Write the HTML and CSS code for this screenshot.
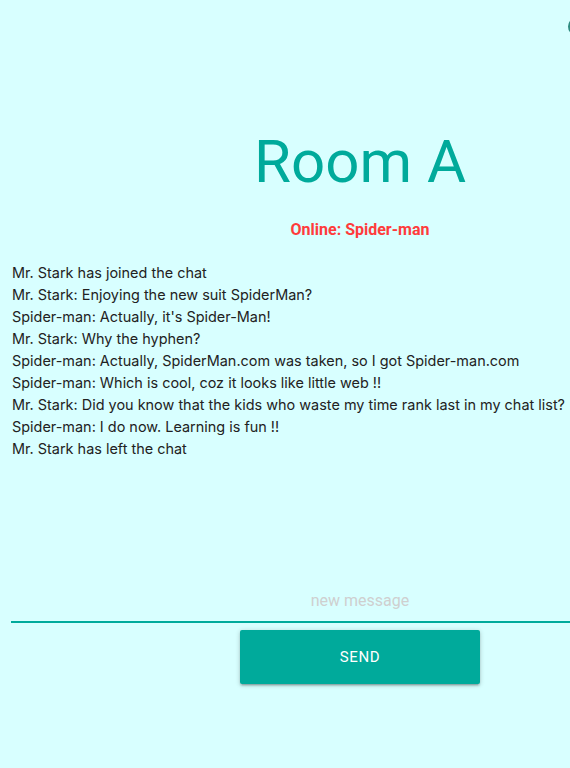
FILE: index.html
```html
<!DOCTYPE html>
<html>
<head>
<meta charset="utf-8">
<link rel="stylesheet" href="styles.css">
</head>
<body>
<div class="page">
  <div class="avatar"></div>
  <h1 class="room-title">Room A</h1>
  <p class="online">Online: Spider-man</p>
  <ul class="messages">
    <li>Mr. Stark has joined the chat</li>
    <li>Mr. Stark: Enjoying the new suit SpiderMan?</li>
    <li>Spider-man: Actually, it's Spider-Man!</li>
    <li>Mr. Stark: Why the hyphen?</li>
    <li>Spider-man: Actually, SpiderMan.com was taken, so I got Spider-man.com</li>
    <li>Spider-man: Which is cool, coz it looks like little web !!</li>
    <li>Mr. Stark: Did you know that the kids who waste my time rank last in my chat list?</li>
    <li>Spider-man: I do now. Learning is fun !!</li>
    <li>Mr. Stark has left the chat</li>
  </ul>
  <form class="composer">
    <input class="message-input" type="text" placeholder="new message">
    <button class="send-btn" type="button">Send</button>
  </form>
</div>
</body>
</html>
```
FILE: styles.css
```css
html, body {
  margin: 0;
  padding: 0;
  overflow: hidden;
  background: #d8ffff;
}
.page {
  position: relative;
  width: 720px;
  min-height: 768px;
  box-sizing: border-box;
  padding: 0 11px;
  font-family: Inter, "Liberation Sans", Arial, sans-serif;
}
.avatar {
  position: absolute;
  left: 568px;
  top: 17px;
  width: 19px;
  height: 19px;
  border-radius: 50%;
  border: 2px solid #2f8b80;
  box-sizing: border-box;
}
.room-title {
  margin: 0;
  padding-top: 129px;
  font-family: Roboto, sans-serif;
  font-weight: 400;
  font-size: 60px;
  line-height: 66px;
  color: #00aa9b;
  text-align: center;
}
.online {
  margin: 25px 0 0;
  font-family: Roboto, sans-serif;
  font-weight: 700;
  font-size: 16px;
  line-height: 20px;
  color: #ff3b3b;
  text-align: center;
}
.messages {
  list-style: none;
  margin: 22px 0 0;
  padding: 0 0 0 1px;
  font-size: 14.45px;
  line-height: 22px;
  color: #222;
}
.messages li {
  white-space: nowrap;
}
.composer {
  margin-top: 119px;
  display: flex;
  flex-direction: column;
  align-items: center;
}
.message-input {
  width: 100%;
  box-sizing: border-box;
  height: 44px;
  border: none;
  border-bottom: 2px solid #00aa9b;
  background: transparent;
  font-family: Roboto, sans-serif;
  font-size: 16px;
  text-align: center;
  outline: none;
  padding: 0;
}
.message-input::placeholder {
  color: #cfcfcf;
}
.send-btn {
  margin-top: 7px;
  width: 240px;
  height: 54px;
  border: none;
  border-radius: 2px;
  background: #00aa9b;
  color: #fff;
  font-family: Roboto, sans-serif;
  font-size: 15px;
  font-weight: 400;
  text-transform: uppercase;
  letter-spacing: 0.6px;
  box-shadow: 0 2px 2px rgba(0,0,0,0.14), 0 3px 1px -2px rgba(0,0,0,0.12), 0 1px 5px rgba(0,0,0,0.2);
}
```
